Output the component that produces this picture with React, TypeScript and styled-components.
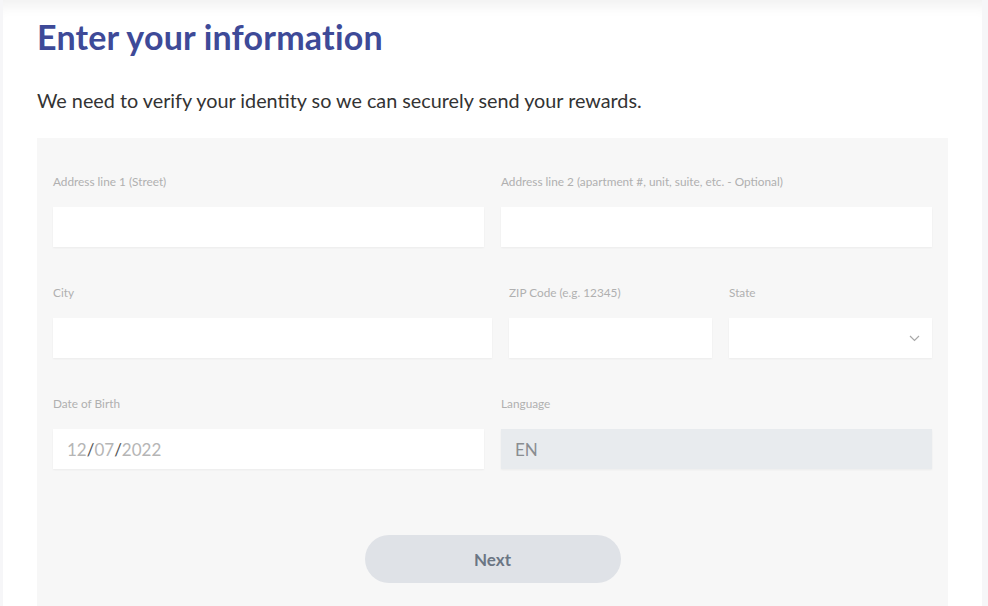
import React from 'react';
import styled, { createGlobalStyle } from 'styled-components';

const GlobalStyle = createGlobalStyle`
  * { box-sizing: border-box; }
  body {
    margin: 0;
    background: #f6f6f8;
    font-family: Lato, "Noto Sans", sans-serif;
  }
`;

const Page = styled.div`
  margin: 0 6px 0 3px;
  min-height: 606px;
  background: #fff;
  padding: 17px 34px 0 34px;
  box-shadow: inset 0 16px 14px -10px rgba(0, 0, 0, 0.06);
`;

const Title = styled.h1`
  margin: 0;
  font-size: 34px;
  font-weight: 700;
  line-height: 40px;
  letter-spacing: 0.2px;
  color: #3e4a98;
`;

const Subtitle = styled.p`
  margin: 31px 0 0;
  font-size: 19.8px;
  line-height: 24px;
  color: #333;
`;

const Panel = styled.form`
  margin-top: 26px;
  width: 911px;
  background: #f7f7f7;
  padding: 37px 16px 40px;
  display: flex;
  flex-direction: column;
  gap: 39px;
`;

const Row = styled.div<{ $cols: string }>`
  display: grid;
  grid-template-columns: ${(p) => p.$cols};
  column-gap: 17px;
`;

const Field = styled.div`
  display: flex;
  flex-direction: column;
`;

const Label = styled.label`
  font-size: 11.8px;
  line-height: 14px;
  color: #b0b0b0;
  margin-bottom: 18px;
`;

const Input = styled.div<{ $disabled?: boolean }>`
  height: 40px;
  background: ${(p) => (p.$disabled ? '#e8ebee' : '#fff')};
  box-shadow: 0 1px 2px rgba(0, 0, 0, 0.05);
  display: flex;
  align-items: center;
  justify-content: space-between;
  padding: 0 12px 0 14px;
  font-size: 17px;
  color: ${(p) => (p.$disabled ? '#8a8d91' : '#b5b5b5')};
`;

const Sep = styled.span`
  color: #555;
`;

const ButtonRow = styled.div`
  display: flex;
  justify-content: center;
  padding-top: 27px;
`;

const NextButton = styled.button`
  width: 256px;
  height: 48px;
  border: none;
  border-radius: 24px;
  background: #dfe2e7;
  color: #6b7684;
  font-family: Lato, "Noto Sans", sans-serif;
  font-size: 17px;
  font-weight: 700;
`;

const Chevron = () => (
  <svg width="11" height="7" viewBox="0 0 11 7" fill="none">
    <path d="M1 1l4.5 4.5L10 1" stroke="#a8a8a8" strokeWidth="1.2" />
  </svg>
);

const App: React.FC = () => (
  <>
    <GlobalStyle />
    <Page>
      <Title>Enter your information</Title>
      <Subtitle>We need to verify your identity so we can securely send your rewards.</Subtitle>
      <Panel>
        <Row $cols="431px 431px">
          <Field>
            <Label>Address line 1 (Street)</Label>
            <Input />
          </Field>
          <Field>
            <Label>Address line 2 (apartment #, unit, suite, etc. - Optional)</Label>
            <Input />
          </Field>
        </Row>
        <Row $cols="439px 203px 203px">
          <Field>
            <Label>City</Label>
            <Input />
          </Field>
          <Field>
            <Label>ZIP Code (e.g. 12345)</Label>
            <Input />
          </Field>
          <Field>
            <Label>State</Label>
            <Input>
              <span />
              <Chevron />
            </Input>
          </Field>
        </Row>
        <Row $cols="431px 431px">
          <Field>
            <Label>Date of Birth</Label>
            <Input>
              <span>
                12<Sep>/</Sep>07<Sep>/</Sep>2022
              </span>
            </Input>
          </Field>
          <Field>
            <Label>Language</Label>
            <Input $disabled>EN</Input>
          </Field>
        </Row>
        <ButtonRow>
          <NextButton type="button">Next</NextButton>
        </ButtonRow>
      </Panel>
    </Page>
  </>
);

export default App;
